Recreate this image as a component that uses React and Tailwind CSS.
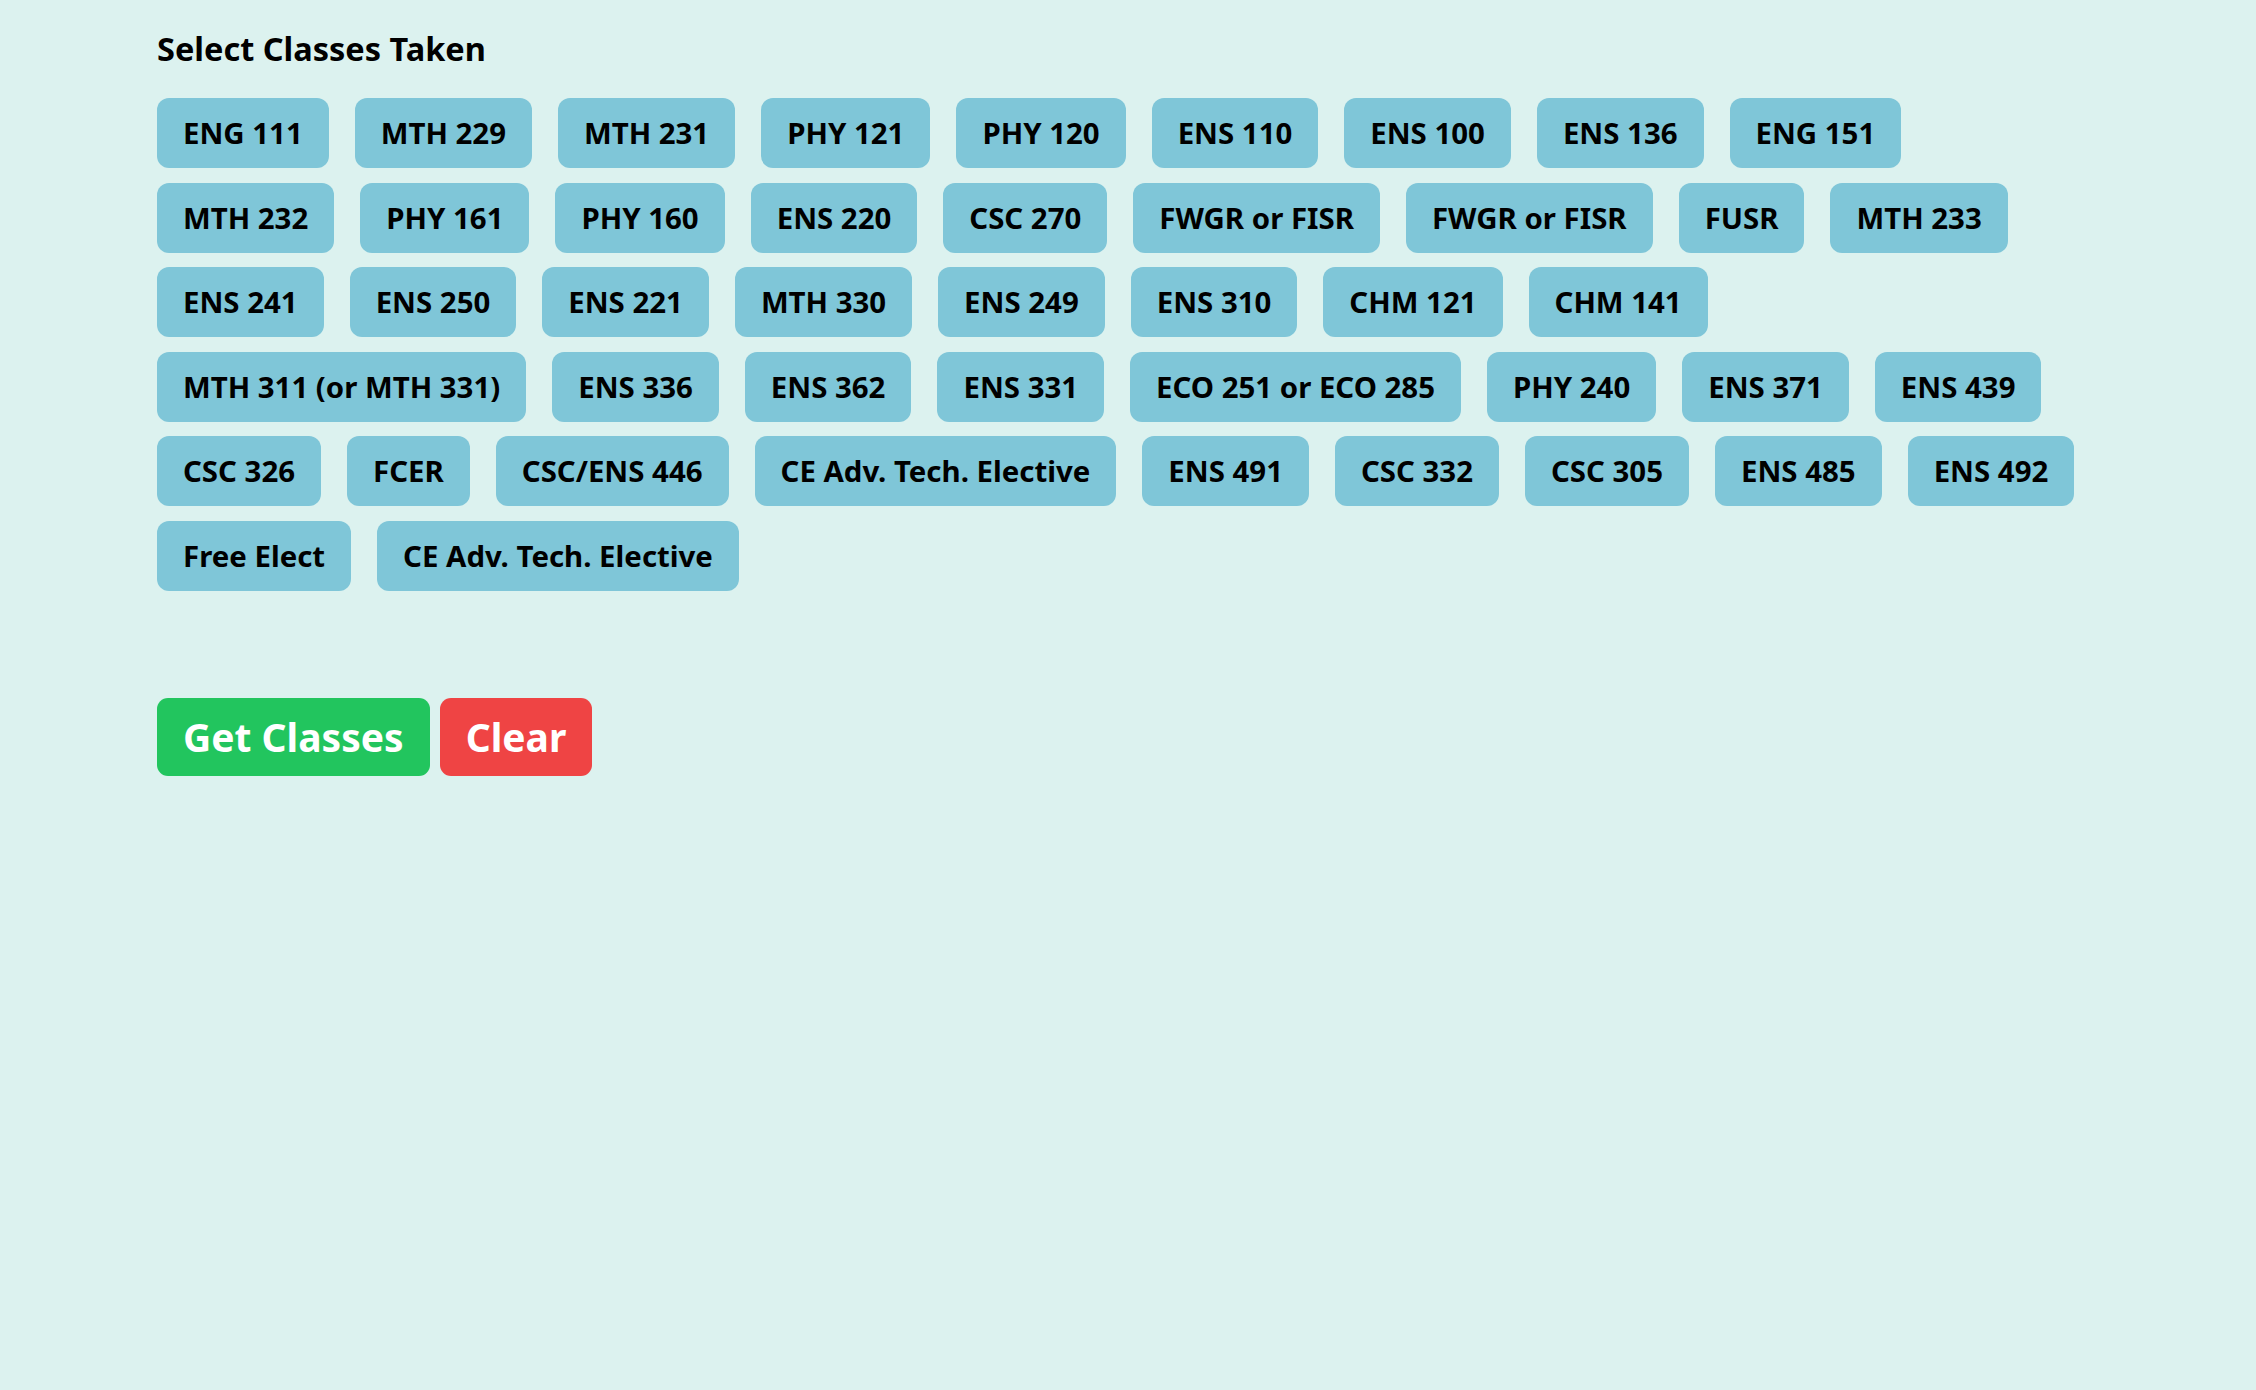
import { useState } from "react";

const classes = [
  "ENG 111", "MTH 229", "MTH 231", "PHY 121", "PHY 120", "ENS 110", "ENS 100", "ENS 136", "ENG 151",
  "MTH 232", "PHY 161", "PHY 160", "ENS 220", "CSC 270", "FWGR or FISR", "FWGR or FISR", "FUSR", "MTH 233",
  "ENS 241", "ENS 250", "ENS 221", "MTH 330", "ENS 249", "ENS 310", "CHM 121", "CHM 141",
  "MTH 311 (or MTH 331)", "ENS 336", "ENS 362", "ENS 331", "ECO 251 or ECO 285", "PHY 240", "ENS 371", "ENS 439",
  "CSC 326", "FCER", "CSC/ENS 446", "CE Adv. Tech. Elective", "ENS 491", "CSC 332", "CSC 305", "ENS 485", "ENS 492",
  "Free Elect", "CE Adv. Tech. Elective",
];

export default function App() {
  const [taken, setTaken] = useState([]);

  const toggle = (i) => {
    setTaken((t) => (t.includes(i) ? t.filter((x) => x !== i) : [...t, i]));
  };

  return (
    <div
      className="min-h-screen bg-[#dcf2ef] pl-[157px] pt-[25px] text-black"
      style={{ fontFamily: '"Noto Sans", "Open Sans", sans-serif' }}
    >
      <h2 className="text-[32.5px] leading-[48px] font-bold">Select Classes Taken</h2>

      <div className="mt-[25px] flex w-[1930px] flex-wrap gap-x-[26px] gap-y-[14.6px]">
        {classes.map((c, i) => (
          <button
            key={i}
            onClick={() => toggle(i)}
            className={
              taken.includes(i)
                ? "h-[70px] rounded-[12px] bg-[#4fa8c0] px-[26px] text-[29.4px] font-bold"
                : "h-[70px] rounded-[12px] bg-[#7fc6d8] px-[26px] text-[29.4px] font-bold"
            }
          >
            {c}
          </button>
        ))}
      </div>

      <div className="mt-[107px] flex gap-[10px]">
        <button className="h-[78px] rounded-[11px] bg-[#22c55e] px-[26px] text-[39px] font-bold text-white">
          Get Classes
        </button>
        <button
          onClick={() => setTaken([])}
          className="h-[78px] rounded-[11px] bg-[#ef4444] px-[26px] text-[39px] font-bold text-white"
        >
          Clear
        </button>
      </div>
    </div>
  );
}
